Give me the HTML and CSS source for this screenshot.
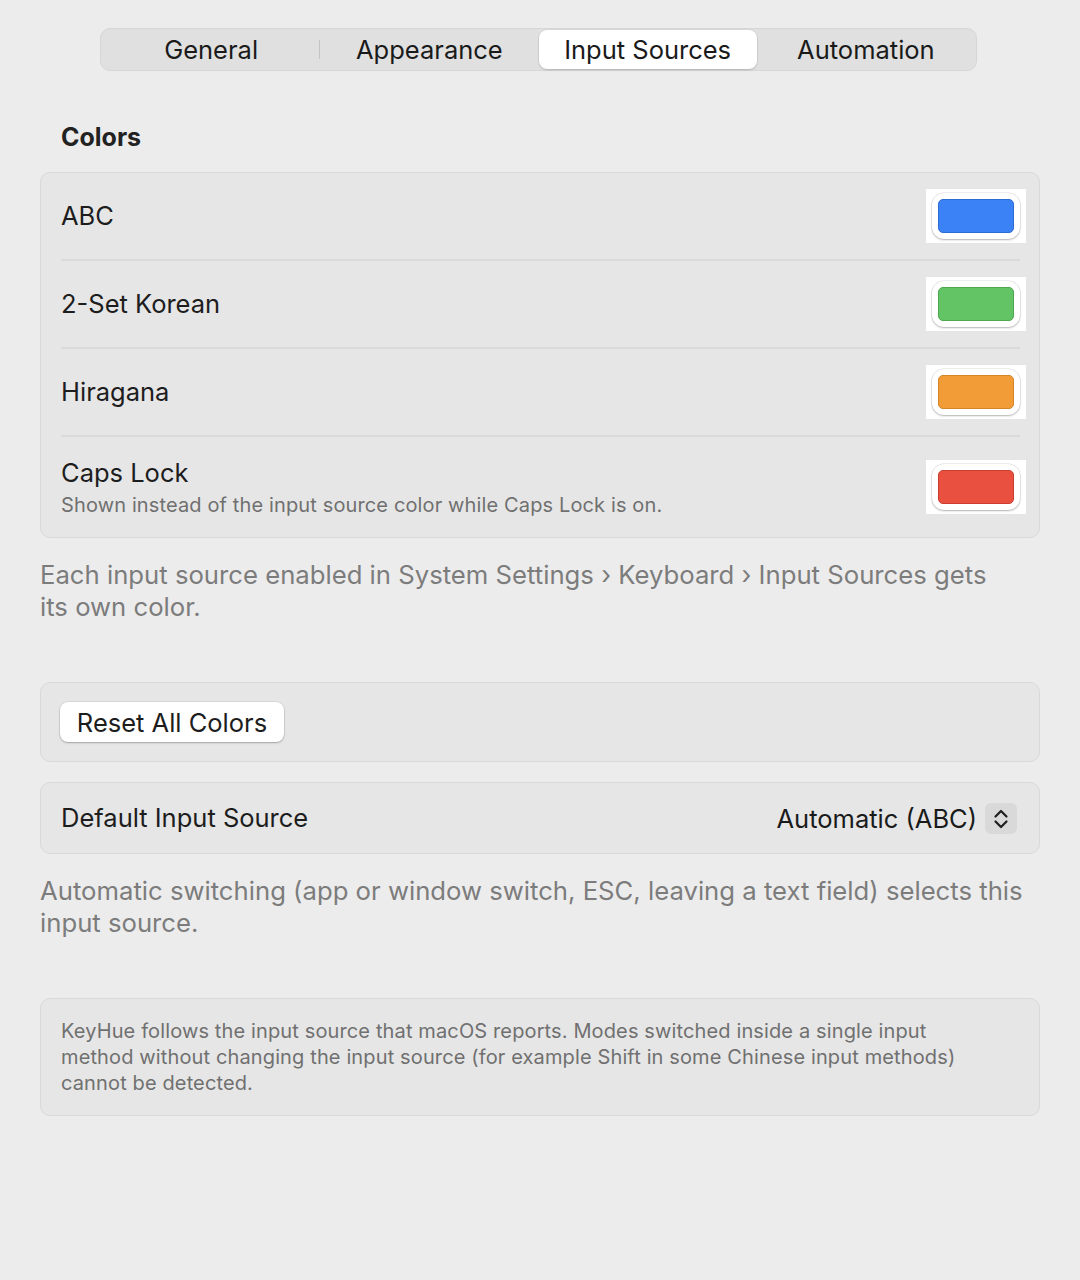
FILE: index.html
```html
<!DOCTYPE html>
<html>
<head>
<meta charset="utf-8">
<link rel="stylesheet" href="styles.css">
</head>
<body>
<div class="page">
  <nav class="tabs">
    <div class="tab">General</div>
    <div class="tab sep">Appearance</div>
    <div class="tab active">Input Sources</div>
    <div class="tab">Automation</div>
  </nav>

  <h2 class="section-title">Colors</h2>

  <section class="card colors">
    <div class="row">
      <div class="label">ABC</div>
      <div class="well"><div class="pill"><div class="swatch blue"></div></div></div>
    </div>
    <div class="row">
      <div class="label">2-Set Korean</div>
      <div class="well"><div class="pill"><div class="swatch green"></div></div></div>
    </div>
    <div class="row">
      <div class="label">Hiragana</div>
      <div class="well"><div class="pill"><div class="swatch orange"></div></div></div>
    </div>
    <div class="row caps">
      <div class="texts">
        <div class="label">Caps Lock</div>
        <div class="sub">Shown instead of the input source color while Caps Lock is on.</div>
      </div>
      <div class="well"><div class="pill"><div class="swatch red"></div></div></div>
    </div>
  </section>

  <p class="note">Each input source enabled in System Settings › Keyboard › Input Sources gets its own color.</p>

  <section class="card reset">
    <button class="btn">Reset All Colors</button>
  </section>

  <section class="card default">
    <div class="label">Default Input Source</div>
    <div class="popup">
      <span class="value">Automatic (ABC)</span>
      <span class="stepper">
        <svg width="32" height="31" viewBox="0 0 32 31">
          <path d="M10.5 13.5 L16 8 L21.5 13.5" fill="none" stroke="#1f1f1f" stroke-width="2.2" stroke-linecap="round" stroke-linejoin="round"/>
          <path d="M10.5 18.5 L16 24 L21.5 18.5" fill="none" stroke="#1f1f1f" stroke-width="2.2" stroke-linecap="round" stroke-linejoin="round"/>
        </svg>
      </span>
    </div>
  </section>

  <p class="note note2">Automatic switching (app or window switch, ESC, leaving a text field) selects this input source.</p>

  <section class="card info">
    <p>KeyHue follows the input source that macOS reports. Modes switched inside a single input method without changing the input source (for example Shift in some Chinese input methods) cannot be detected.</p>
  </section>
</div>
</body>
</html>
```

FILE: styles.css
```css
html, body {
  margin: 0;
  padding: 0;
  background: #ececec;
}
body {
  font-family: Inter, "Liberation Sans", Arial, sans-serif;
  color: #1d1d1d;
  width: 1080px;
  height: 1280px;
}
.page {
  padding: 28px 40px 0 40px;
}
.tabs {
  margin-left: 60px;
  width: 877px;
  height: 43px;
  box-sizing: border-box;
  background: #e0e0e0;
  border: 1px solid #d6d6d6;
  border-radius: 10px;
  display: grid;
  grid-template-columns: repeat(4, 1fr);
  padding: 1px;
}
.tab {
  position: relative;
  display: flex;
  align-items: center;
  justify-content: center;
  font-size: 25.5px;
  color: #1a1a1a;
  border-radius: 8px;
}
.tab.sep::before {
  content: "";
  position: absolute;
  left: -1px;
  top: 10px;
  bottom: 10px;
  width: 1px;
  background: #c4c4c4;
}
.tab.active {
  background: #ffffff;
  box-shadow: 0 1px 2px rgba(0,0,0,0.18), 0 0 0 0.5px rgba(0,0,0,0.06);
}
.section-title {
  margin: 50px 0 19px 21px;
  font-size: 25px;
  line-height: 32px;
  font-weight: 700;
  color: #222;
}
.card {
  background: #e6e6e6;
  border: 1px solid #d9d9d9;
  border-radius: 10px;
  box-sizing: border-box;
}
.row {
  height: 88px;
  margin: 0 19px 0 20px;
  display: flex;
  align-items: center;
  justify-content: space-between;
  border-bottom: 2px solid #dadada;
  box-sizing: border-box;
}
.row.caps {
  height: 100px;
  border-bottom: none;
}
.label {
  font-size: 25.5px;
  color: #1d1d1d;
  margin-top: -1px;
}
.texts .label {
  line-height: 30px;
  margin-top: 2px;
}
.sub {
  font-size: 20px;
  letter-spacing: 0.13px;
  color: #707070;
  margin-top: 3px;
  line-height: 28px;
}
.well {
  background: #ffffff;
  padding: 4px 6px;
  margin-right: -6px;
}
.pill {
  width: 88px;
  height: 46px;
  box-sizing: border-box;
  border-radius: 12px;
  background: #ffffff;
  box-shadow: 0 1px 2px rgba(0,0,0,0.25), 0 0 0 0.5px rgba(0,0,0,0.12);
  padding: 6px;
}
.swatch {
  width: 76px;
  height: 34px;
  box-sizing: border-box;
  border-radius: 5px;
}
.blue { background: #3b82f6; border: 1px solid #2e6cd4; }
.green { background: #63c466; border: 1px solid #4ea651; }
.orange { background: #f29c38; border: 1px solid #d5842a; }
.red { background: #ea5040; border: 1px solid #c93e30; }

.note {
  margin: 21px 0 0 0;
  padding-right: 20px;
  font-size: 25.7px;
  line-height: 32px;
  color: #7c7c7c;
}
.reset {
  margin-top: 59px;
  height: 80px;
  padding: 19px 19px;
}
.btn {
  font-family: inherit;
  font-size: 25.5px;
  color: #1d1d1d;
  background: #ffffff;
  border: none;
  border-radius: 8px;
  height: 40px;
  width: 224px;
  padding: 0;
  box-shadow: 0 1px 2px rgba(0,0,0,0.25), 0 0 0 0.5px rgba(0,0,0,0.1);
}
.default {
  margin-top: 20px;
  height: 72px;
  padding: 0 22px 0 20px;
  display: flex;
  align-items: center;
  justify-content: space-between;
}
.popup {
  display: flex;
  align-items: center;
  gap: 8px;
}
.value {
  font-size: 25.5px;
  color: #1a1a1a;
}
.stepper {
  width: 32px;
  height: 31px;
  border-radius: 6px;
  background: #d9d9d9;
  display: flex;
}
.note2 {
  margin-top: 21px;
  padding-right: 0;
}
.info {
  margin-top: 59px;
  height: 118px;
  padding: 19px 40px 0 20px;
}
.info p {
  margin: 0;
  font-size: 20px;
  letter-spacing: 0.13px;
  line-height: 26px;
  color: #707070;
}
```
